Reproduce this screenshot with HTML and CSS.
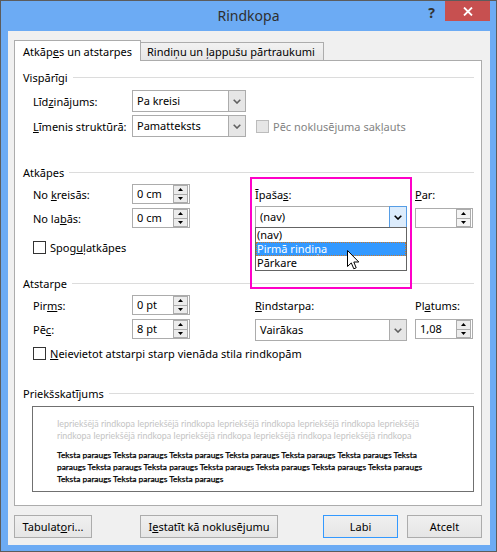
FILE: index.html
```html
<!DOCTYPE html>
<html lang="lv">
<head>
    <meta charset="UTF-8">
    <meta name="viewport" content="width=device-width, initial-scale=1.0">
    <title>Rindkopa</title>
    <link rel="stylesheet" href="styles.css">
</head>
<body>
    <div class="window">
        <div class="titlebar">
            <span class="title">Rindkopa</span>
            <div class="caption-buttons">
                <span class="help">?</span>
                <span class="close">
                    <svg width="10" height="9" viewBox="0 0 10 9"><path d="M1 0.5 L9 8.5 M9 0.5 L1 8.5" stroke="#fff" stroke-width="1.8"/></svg>
                </span>
            </div>
        </div>

        <div class="client">
            <div class="tabs">
                <div class="tab active">Atkāp<u>e</u>s un atstarpes</div>
                <div class="tab">Rindiņu un <u>ļ</u>appušu pārtraukumi</div>
            </div>

            <div class="panel">
                <!-- Vispārīgi -->
                <section class="group">
                    <div class="group-head"><span>Vispārīgi</span><i></i></div>
                    <div class="field-row first">
                        <label>Līd<u>z</u>inājums:</label>
                        <div class="select wide">
                            <span class="select-value">Pa kreisi</span>
                            <span class="select-arrow"><svg width="8" height="5" viewBox="0 0 8 5"><path d="M0.7 0.7 L4 4 L7.3 0.7"/></svg></span>
                        </div>
                    </div>
                    <div class="field-row second">
                        <label><u>L</u>īmenis struktūrā:</label>
                        <div class="select wide">
                            <span class="select-value">Pamatteksts</span>
                            <span class="select-arrow"><svg width="8" height="5" viewBox="0 0 8 5"><path d="M0.7 0.7 L4 4 L7.3 0.7"/></svg></span>
                        </div>
                        <div class="check disabled"><span class="box"></span>Pēc noklusējuma sakļauts</div>
                    </div>
                </section>

                <!-- Atkāpes -->
                <section class="group indent">
                    <div class="group-head"><span>Atkāpes</span><i></i></div>
                    <div class="group-body">
                        <div class="col-left">
                            <div class="field-row">
                                <label>No <u>k</u>reisās:</label>
                                <div class="spin">
                                    <span class="spin-value">0 cm</span>
                                    <span class="spin-btns">
                                        <span><svg width="5" height="3" viewBox="0 0 5 3"><path d="M0 3 L2.5 0 L5 3Z"/></svg></span>
                                        <span><svg width="5" height="3" viewBox="0 0 5 3"><path d="M0 0 L2.5 3 L5 0Z"/></svg></span>
                                    </span>
                                </div>
                            </div>
                            <div class="field-row next">
                                <label>No la<u>b</u>ās:</label>
                                <div class="spin">
                                    <span class="spin-value">0 cm</span>
                                    <span class="spin-btns">
                                        <span><svg width="5" height="3" viewBox="0 0 5 3"><path d="M0 3 L2.5 0 L5 3Z"/></svg></span>
                                        <span><svg width="5" height="3" viewBox="0 0 5 3"><path d="M0 0 L2.5 3 L5 0Z"/></svg></span>
                                    </span>
                                </div>
                            </div>
                            <div class="check mirror"><span class="box"></span>Spog<u>u</u>ļatkāpes</div>
                        </div>
                        <div class="col-mid">
                            <div class="col-label">Īpaša<u>s</u>:</div>
                            <div class="dropdown">
                                <div class="select focused">
                                    <span class="select-value">(nav)</span>
                                    <span class="select-arrow"><svg width="8" height="5" viewBox="0 0 8 5"><path d="M0.7 0.7 L4 4 L7.3 0.7"/></svg></span>
                                </div>
                                <ul class="dropdown-list">
                                    <li>(nav)</li>
                                    <li class="selected">Pirmā rindiņa</li>
                                    <li>Pārkare</li>
                                </ul>
                            </div>
                        </div>
                        <div class="col-right">
                            <div class="col-label"><u>P</u>ar:</div>
                            <div class="spin disabled lower">
                                <span class="spin-value"></span>
                                <span class="spin-btns">
                                    <span><svg width="5" height="3" viewBox="0 0 5 3"><path d="M0 3 L2.5 0 L5 3Z"/></svg></span>
                                    <span><svg width="5" height="3" viewBox="0 0 5 3"><path d="M0 0 L2.5 3 L5 0Z"/></svg></span>
                                </span>
                            </div>
                        </div>
                    </div>
                </section>

                <!-- Atstarpe -->
                <section class="group spacing">
                    <div class="group-head"><span>Atstarpe</span><i></i></div>
                    <div class="group-body">
                        <div class="col-left">
                            <div class="field-row">
                                <label>Pir<u>m</u>s:</label>
                                <div class="spin">
                                    <span class="spin-value">0 pt</span>
                                    <span class="spin-btns">
                                        <span><svg width="5" height="3" viewBox="0 0 5 3"><path d="M0 3 L2.5 0 L5 3Z"/></svg></span>
                                        <span><svg width="5" height="3" viewBox="0 0 5 3"><path d="M0 0 L2.5 3 L5 0Z"/></svg></span>
                                    </span>
                                </div>
                            </div>
                            <div class="field-row next">
                                <label>Pē<u>c</u>:</label>
                                <div class="spin">
                                    <span class="spin-value">8 pt</span>
                                    <span class="spin-btns">
                                        <span><svg width="5" height="3" viewBox="0 0 5 3"><path d="M0 3 L2.5 0 L5 3Z"/></svg></span>
                                        <span><svg width="5" height="3" viewBox="0 0 5 3"><path d="M0 0 L2.5 3 L5 0Z"/></svg></span>
                                    </span>
                                </div>
                            </div>
                            <div class="check same-style"><span class="box"></span><u>N</u>eievietot atstarpi starp vienāda stila rindkopām</div>
                        </div>
                        <div class="col-mid">
                            <div class="col-label"><u>R</u>indstarpa:</div>
                            <div class="select lower">
                                <span class="select-value">Vairākas</span>
                                <span class="select-arrow"><svg width="8" height="5" viewBox="0 0 8 5"><path d="M0.7 0.7 L4 4 L7.3 0.7"/></svg></span>
                            </div>
                        </div>
                        <div class="col-right">
                            <div class="col-label">Pl<u>a</u>tums:</div>
                            <div class="spin lower">
                                <span class="spin-value">1,08</span>
                                <span class="spin-btns">
                                    <span><svg width="5" height="3" viewBox="0 0 5 3"><path d="M0 3 L2.5 0 L5 3Z"/></svg></span>
                                    <span><svg width="5" height="3" viewBox="0 0 5 3"><path d="M0 0 L2.5 3 L5 0Z"/></svg></span>
                                </span>
                            </div>
                        </div>
                    </div>
                </section>

                <!-- Priekšskatījums -->
                <section class="group preview-group">
                    <div class="group-head"><span>Priekšskatījums</span><i></i></div>
                    <div class="preview">
                        <div class="prev-para">
                            <div>Iepriekšējā rindkopa Iepriekšējā rindkopa Iepriekšējā rindkopa Iepriekšējā rindkopa Iepriekšējā</div>
                            <div>rindkopa Iepriekšējā rindkopa Iepriekšējā rindkopa Iepriekšējā rindkopa Iepriekšējā rindkopa</div>
                        </div>
                        <div class="sample">
                            <div>Teksta paraugs Teksta paraugs Teksta paraugs Teksta paraugs Teksta paraugs Teksta paraugs Teksta</div>
                            <div>paraugs Teksta paraugs Teksta paraugs Teksta paraugs Teksta paraugs Teksta paraugs Teksta paraugs</div>
                            <div>Teksta paraugs Teksta paraugs Teksta paraugs</div>
                        </div>
                    </div>
                </section>

                <div class="highlight"></div>
                <svg class="cursor" width="13" height="20" viewBox="0 0 13 20"><path d="M0.5 0.5 L0.5 16.5 L4.3 12.9 L6.8 18.8 L9.2 17.8 L6.8 12 L11.8 12 Z" fill="#fff" stroke="#000" stroke-width="1"/></svg>
            </div>

            <div class="buttons">
                <button class="btn tabs-btn">Tabulat<u>o</u>ri...</button>
                <button class="btn default-btn">I<u>e</u>statīt kā noklusējumu</button>
                <button class="btn ok-btn">Labi</button>
                <button class="btn">Atcelt</button>
            </div>
        </div>
    </div>
</body>
</html>
```

FILE: styles.css
```css
body {
    margin: 0;
    font-family: "Noto Sans", sans-serif;
    font-size: 11px;
    color: #000;
}
.window {
    width: 497px;
    height: 552px;
    box-sizing: border-box;
    border: 1px solid #5c5c5c;
    background-color: #6cabf4;
    display: flex;
    flex-direction: column;
}
.titlebar {
    height: 30px;
    display: grid;
    grid-template-columns: 1fr auto 1fr;
}
.title {
    grid-column: 2;
    font-size: 14px;
    line-height: 30px;
    color: #2f2f2f;
}
.caption-buttons {
    display: flex;
    justify-content: flex-end;
    align-items: flex-start;
    padding-right: 6px;
}
.help {
    font-weight: bold;
    font-size: 14px;
    line-height: 20px;
    color: #333;
    margin: 2px 10px 0 0;
}
.close {
    width: 45px;
    height: 20px;
    background-color: #c75050;
    display: flex;
    align-items: center;
    justify-content: center;
}
.client {
    flex: 1;
    margin: 0 6px 6px 7px;
    padding: 9px 8px 7px 6px;
    background-color: #f0f0f0;
}

/* tabs */
.tabs {
    display: flex;
    align-items: flex-end;
    height: 20px;
}
.tab {
    box-sizing: border-box;
    height: 18px;
    width: 183px;
    border: 1px solid #acacac;
    border-left: none;
    border-bottom: none;
    background: linear-gradient(#f2f2f2, #e6e6e6);
    padding-left: 6px;
    line-height: 17px;
}
.tab.active {
    position: relative;
    z-index: 1;
    width: 127px;
    height: 21px;
    margin-bottom: -1px;
    border-left: 1px solid #acacac;
    background: #fff;
    padding-left: 8px;
    line-height: 21px;
}
.panel {
    position: relative;
    box-sizing: border-box;
    height: 446px;
    border: 1px solid #acacac;
    background-color: #fff;
    padding: 8px 7px 0 8px;
}

/* groups */
.group-head {
    display: flex;
    align-items: center;
    height: 16px;
    gap: 5px;
}
.group-head i {
    flex: 1;
    height: 1px;
    background-color: #dcdcdc;
}
.group.indent {
    margin-top: 27px;
}
.group.spacing {
    margin-top: 21px;
}
.group.preview-group {
    margin-top: 25px;
}
.group-body {
    display: flex;
    margin-top: 4px;
    padding-left: 10px;
}
.col-left {
    width: 222px;
}
.col-mid {
    width: 160px;
}
.col-right {
    width: 58px;
}
.col-label {
    margin-top: 3px;
    height: 16px;
    line-height: 16px;
}
.field-row {
    display: flex;
    align-items: center;
}
.field-row label {
    width: 99px;
}
.group > .field-row {
    padding-left: 10px;
}
.field-row.first {
    margin-top: 5px;
}
.field-row.second {
    margin-top: 3px;
}
.field-row.next {
    margin-top: 4px;
}

/* select */
.select {
    box-sizing: border-box;
    width: 152px;
    height: 22px;
    margin-top: 3px;
    border: 1px solid #acacac;
    background-color: #fff;
    display: flex;
}
.select.wide {
    width: 114px;
    margin-top: 0;
}
.select.lower {
    margin-top: 5px;
}
.select-value {
    flex: 1;
    padding-left: 4px;
    line-height: 20px;
}
.select-arrow {
    width: 16px;
    border-left: 1px solid #acacac;
    background-color: #e6e6e6;
    display: flex;
    align-items: center;
    justify-content: center;
}
.select-arrow path {
    fill: none;
    stroke: #606060;
    stroke-width: 1.6;
}
.select.focused .select-arrow {
    margin: -1px -1px -1px 0;
    border: 1px solid #569de5;
    background-color: #dcecfc;
}
.select.focused .select-arrow path {
    stroke: #000;
}

/* dropdown list */
.dropdown {
    position: relative;
    width: 152px;
}
.dropdown-list {
    position: absolute;
    left: 0;
    right: 0;
    top: 21px;
    margin: 0;
    padding: 0;
    list-style: none;
    border: 1px solid #646464;
    background-color: #fff;
    z-index: 2;
}
.dropdown-list li {
    box-sizing: border-box;
    height: 14px;
    line-height: 13px;
    padding-left: 1px;
}
.dropdown-list li.selected {
    background-color: #3399ff;
    color: #fff;
    outline: 1px dotted #cc7a2a;
    outline-offset: -1px;
}

/* spinner */
.spin {
    box-sizing: border-box;
    width: 58px;
    height: 20px;
    border: 1px solid #acacac;
    background-color: #fff;
    display: flex;
}
.spin.lower {
    margin-top: 5px;
}
.spin-value {
    flex: 1;
    padding-left: 4px;
    line-height: 18px;
}
.spin-btns {
    width: 15px;
    margin: 0 1px 0 0;
    display: flex;
    flex-direction: column;
}
.spin-btns span {
    flex: 1;
    box-sizing: border-box;
    border: 1px solid #acacac;
    background-color: #ececec;
    display: flex;
    align-items: center;
    justify-content: center;
}
.spin-btns span + span {
    border-top: none;
}
.spin.disabled .spin-btns span {
    background-color: #f4f4f4;
}

/* checkboxes */
.check {
    display: flex;
    align-items: center;
    height: 13px;
    line-height: 13px;
    white-space: nowrap;
}
.check .box {
    flex-shrink: 0;
    box-sizing: border-box;
    width: 13px;
    height: 13px;
    border: 1px solid #333;
    background-color: #fff;
    margin-right: 4px;
}
.check.disabled {
    margin-left: 10px;
    color: #838383;
}
.check.disabled .box {
    border-color: #bcbcbc;
    background-color: #e6e6e6;
}
.check.mirror {
    margin-top: 13px;
}
.check.same-style {
    margin-top: 8px;
}

/* preview */
.preview {
    box-sizing: border-box;
    height: 86px;
    margin: 5px 0 0 9px;
    border: 1px solid #707070;
    padding: 11px 0 0 24px;
    font-family: Lato, sans-serif;
    font-size: 8.9px;
    line-height: 11.5px;
    white-space: nowrap;
}
.prev-para {
    color: #c4c4c4;
}
.sample {
    margin-top: 8px;
    font-size: 8.4px;
    line-height: 12px;
    color: #000;
    -webkit-text-stroke: 0.25px #000;
}

/* overlays */
.highlight {
    position: absolute;
    left: 235px;
    top: 116px;
    width: 162px;
    height: 112px;
    box-sizing: border-box;
    border: 2px solid #ff00c8;
    pointer-events: none;
}
.cursor {
    position: absolute;
    left: 332px;
    top: 189px;
    z-index: 3;
}

/* buttons */
.buttons {
    display: flex;
    margin-top: 9px;
}
.btn {
    box-sizing: border-box;
    height: 23px;
    width: 75px;
    border: 1px solid #acacac;
    background: linear-gradient(#f0f0f0, #e5e5e5);
    font-family: "Noto Sans", sans-serif;
    font-size: 11px;
    color: #000;
    padding: 0;
}
.btn.tabs-btn {
    width: 78px;
    margin-right: 48px;
}
.btn.default-btn {
    width: 138px;
}
.btn.ok-btn {
    margin-left: auto;
    margin-right: 9px;
    border-color: #3399ff;
}
```
